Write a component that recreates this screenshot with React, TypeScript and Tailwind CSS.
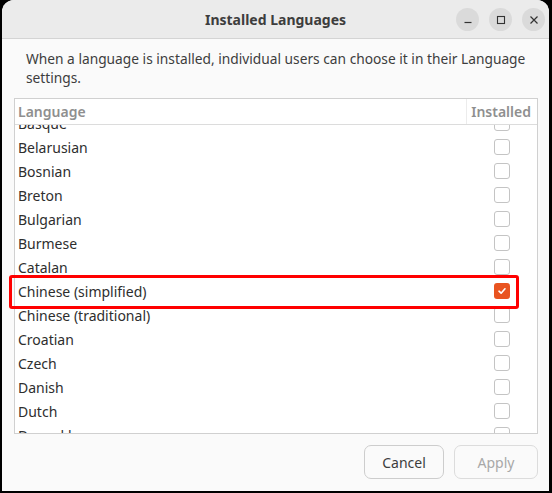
import React from 'react';

const languages = [
  'Basque',
  'Belarusian',
  'Bosnian',
  'Breton',
  'Bulgarian',
  'Burmese',
  'Catalan',
  'Chinese (simplified)',
  'Chinese (traditional)',
  'Croatian',
  'Czech',
  'Danish',
  'Dutch',
  'Dzongkha',
];

const installed = new Set(['Chinese (simplified)']);

function Checkbox({ checked }: { checked: boolean }) {
  if (checked) {
    return (
      <div className="w-[16px] h-[16px] rounded-[3px] bg-[#e95420] flex items-center justify-center">
        <svg width="10" height="10" viewBox="0 0 10 10" fill="none">
          <path d="M2 5.2 L4.1 7.2 L8 2.8" stroke="white" strokeWidth="1.6" strokeLinecap="round" strokeLinejoin="round" />
        </svg>
      </div>
    );
  }
  return <div className="w-[16px] h-[16px] rounded-[3px] border border-[#c4c4c4] bg-white" />;
}

export default function App() {
  return (
    <div
      className="relative w-[552px] h-[493px] bg-black pl-[2px] pr-[3px] pb-[2px] overflow-hidden"
      style={{ fontFamily: '"Noto Sans", "Open Sans", sans-serif' }}
    >
      <div className="h-full rounded-t-[12px] bg-[#fafafa] flex flex-col overflow-hidden">
        {/* title bar */}
        <div className="relative h-[39px] shrink-0 bg-[#ebebeb] border-b border-[#d4d4d4] flex items-center justify-center">
          <span className="text-[14px] font-bold text-[#3d3d3d]">Installed Languages</span>
          <div className="absolute right-[4px] top-[8px] flex gap-[10px]">
            <button className="w-[23px] h-[23px] rounded-full bg-[#dadada] flex items-center justify-center">
              <svg width="10" height="10" viewBox="0 0 10 10">
                <path d="M1.5 7.5 H8.5" stroke="#333" strokeWidth="1.2" />
              </svg>
            </button>
            <button className="w-[23px] h-[23px] rounded-full bg-[#dadada] flex items-center justify-center">
              <svg width="10" height="10" viewBox="0 0 10 10">
                <rect x="1.5" y="1.5" width="7" height="7" fill="none" stroke="#333" strokeWidth="1.1" />
              </svg>
            </button>
            <button className="w-[23px] h-[23px] rounded-full bg-[#dadada] flex items-center justify-center">
              <svg width="10" height="10" viewBox="0 0 10 10">
                <path d="M1.5 1.5 L8.5 8.5 M8.5 1.5 L1.5 8.5" stroke="#333" strokeWidth="1.2" />
              </svg>
            </button>
          </div>
        </div>

        {/* body */}
        <div className="flex-1 flex flex-col px-[12px] pr-[11px]">
          <p className="pl-[12px] pt-[10px] text-[13.75px] leading-[19px] text-[#3d3d3d]">
            When a language is installed, individual users can choose it in their Language settings.
          </p>

          <div className="relative mt-[11px] h-[336px] border border-[#d0d0d0] bg-white flex flex-col">
            <div className="h-[26px] shrink-0 border-b border-[#dcdcdc] flex text-[14px] font-semibold text-[#8f8f8f]">
              <div className="flex-1 pl-[3px] flex items-center">Language</div>
              <div className="w-[71px] border-l border-[#ececec] flex items-center justify-end pr-[6px]">Installed</div>
            </div>
            <div className="flex-1 overflow-hidden">
              <div className="-mt-[14px]">
                {languages.map((lang) => (
                  <div key={lang} className="h-[24px] flex items-center text-[14px] text-[#2e2e2e]">
                    <div className="flex-1 pl-[3px]">{lang}</div>
                    <div className="w-[71px] pl-[28px]">
                      <Checkbox checked={installed.has(lang)} />
                    </div>
                  </div>
                ))}
              </div>
            </div>
          </div>

          <div className="flex justify-end gap-[10px] mt-[11px]">
            <button className="w-[80px] h-[34px] rounded-[7px] border border-[#cdcdcd] bg-[#fafafa] text-[14px] text-[#3d3d3d]">
              Cancel
            </button>
            <button className="w-[84px] h-[34px] rounded-[7px] border border-[#dcdcdc] bg-[#fafafa] text-[14px] text-[#a8a8a8]">
              Apply
            </button>
          </div>
        </div>
      </div>

      {/* annotation highlight */}
      <div className="absolute left-[9px] top-[275px] w-[510px] h-[34px] border-[3px] border-[#ff0000] rounded-[3px] pointer-events-none" />
    </div>
  );
}
